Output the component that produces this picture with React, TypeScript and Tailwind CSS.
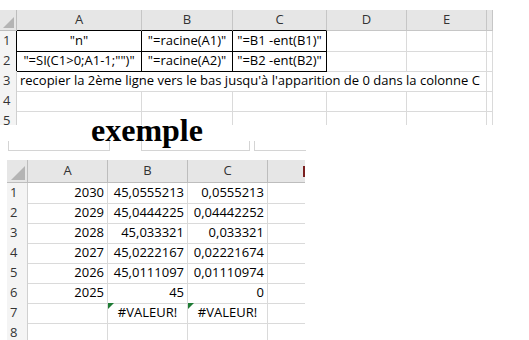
import React from "react";

/* ---------- top sheet ---------- */
const topCols = "grid grid-cols-[17px_125px_91px_94px_80px_80px_6px]";
const grid = "border-r border-b border-[#dadada]";

function Corner({ size }: { size: number }) {
  return (
    <svg width={size} height={size} viewBox="0 0 10 10" className="self-end justify-self-end mb-[2px] mr-[2px]">
      <polygon points="10,0 10,10 0,10" fill="#b4b4b4" />
    </svg>
  );
}

function TopHeader() {
  const letters = ["A", "B", "C", "D", "E", ""];
  return (
    <div className={`${topCols} h-[21px] bg-[#e6e6e6] text-[#333]`}>
      <div className="grid border-r border-b border-[#bdbdbd]">
        <Corner size={11} />
      </div>
      {letters.map((l, i) => (
        <div
          key={i}
          className={`flex items-center justify-center border-r border-b ${
            i < 3 ? "border-b-black border-r-[#c6c6c6]" : "border-[#c6c6c6]"
          }`}
        >
          {l}
        </div>
      ))}
    </div>
  );
}

function RowNum({ n, dark }: { n: number; dark?: boolean }) {
  return (
    <div
      className={`flex items-center pl-[3px] bg-[#f4f4f4] text-[#333] border-r border-b border-[#d0d0d0] ${
        dark ? "border-r-black" : ""
      }`}
    >
      {n}
    </div>
  );
}

function TopSheet() {
  const boxed = "border-r border-b border-black flex items-center justify-center whitespace-nowrap";
  return (
    <div className="h-[125px] overflow-hidden pt-[10px] w-[493px]">
      <TopHeader />
      <div className={`${topCols} h-[20px]`}>
        <RowNum n={1} dark />
        <div className={boxed}>"n"</div>
        <div className={boxed}>"=racine(A1)"</div>
        <div className={boxed}>"=B1 -ent(B1)"</div>
        <div className={grid} />
        <div className={grid} />
        <div className={grid} />
      </div>
      <div className={`${topCols} h-[20px]`}>
        <RowNum n={2} dark />
        <div className={boxed}>"=SI(C1&gt;0;A1-1;"")"</div>
        <div className={boxed}>"=racine(A2)"</div>
        <div className={boxed}>"=B2 -ent(B2)"</div>
        <div className={grid} />
        <div className={grid} />
        <div className={grid} />
      </div>
      <div className={`${topCols} h-[20px]`}>
        <RowNum n={3} />
        <div className="col-span-5 flex items-center pl-[3px] whitespace-nowrap border-r border-b border-[#dadada]">
          recopier la 2ème ligne vers le bas jusqu'à l'apparition de 0 dans la colonne C
        </div>
        <div className={grid} />
      </div>
      {[4, 5].map((n) => (
        <div key={n} className={`${topCols} h-[20px]`}>
          <RowNum n={n} />
          {[0, 1, 2, 3, 4, 5].map((i) => (
            <div key={i} className={grid} />
          ))}
        </div>
      ))}
    </div>
  );
}

/* ---------- example sheet ---------- */
const exCols = "grid grid-cols-[21px_80px_80px_80px_37px]";

const rows: [string, string, string][] = [
  ["2030", "45,0555213", "0,0555213"],
  ["2029", "45,0444225", "0,04442252"],
  ["2028", "45,033321", "0,033321"],
  ["2027", "45,0222167", "0,02221674"],
  ["2026", "45,0111097", "0,01110974"],
  ["2025", "45", "0"],
];

function ErrCell({ text }: { text: string }) {
  return (
    <div className={`relative flex items-center justify-center ${grid}`}>
      <svg width="6" height="6" viewBox="0 0 6 6" className="absolute left-0 top-0">
        <polygon points="0,0 6,0 0,6" fill="#1e7b34" />
      </svg>
      {text}
    </div>
  );
}

function ExampleSheet() {
  return (
    <div className="ml-[7px] w-[298px]">
      <div className={`${exCols} h-[23px] bg-[#e6e6e6] text-[#333]`}>
        <div className="grid border-r border-b border-[#bdbdbd]">
          <Corner size={14} />
        </div>
        {["A", "B", "C"].map((l) => (
          <div key={l} className="flex items-center justify-center border-r border-b border-[#bdbdbd]">
            {l}
          </div>
        ))}
        <div className="flex items-center justify-end border-b border-[#bdbdbd]">
          <div className="h-[11px] w-[2px] bg-[#7a1f1f]" />
        </div>
      </div>
      {rows.map((r, i) => (
        <div key={i} className={`${exCols} h-[20px]`}>
          <RowNum n={i + 1} />
          {r.map((v, j) => (
            <div key={j} className={`flex items-center justify-end pr-[3px] ${grid}`}>
              {v}
            </div>
          ))}
          <div className="border-b border-[#dadada]" />
        </div>
      ))}
      <div className={`${exCols} h-[20px]`}>
        <RowNum n={7} />
        <div className={grid} />
        <ErrCell text="#VALEUR!" />
        <ErrCell text="#VALEUR!" />
        <div className="border-b border-[#dadada]" />
      </div>
      <div className={`${exCols} h-[20px]`}>
        <RowNum n={8} />
        <div className={grid} />
        <div className={grid} />
        <div className={grid} />
        <div className="border-b border-[#dadada]" />
      </div>
    </div>
  );
}

export default function App() {
  return (
    <div className="w-[529px] h-[340px] overflow-hidden bg-white font-['Open_Sans',sans-serif] text-[13px] text-black">
      <TopSheet />
      <div className="relative h-[35px]">
        <div className="absolute left-[91px] top-[-12px] font-['Liberation_Serif',serif] font-bold text-[32px] leading-[34px] text-black">
          exemple
        </div>
        <div className="flex pt-[16px]">
          <div className="ml-[8px] h-[10px] w-[102px] border-x border-b border-[#d4d4d4]" />
          <div className="ml-[31px] h-[10px] w-[109px] border-x border-b border-[#d4d4d4]" />
          <div className="ml-[4px] h-[10px] w-[52px] border-l border-b border-[#d4d4d4]" />
        </div>
      </div>
      <ExampleSheet />
    </div>
  );
}
